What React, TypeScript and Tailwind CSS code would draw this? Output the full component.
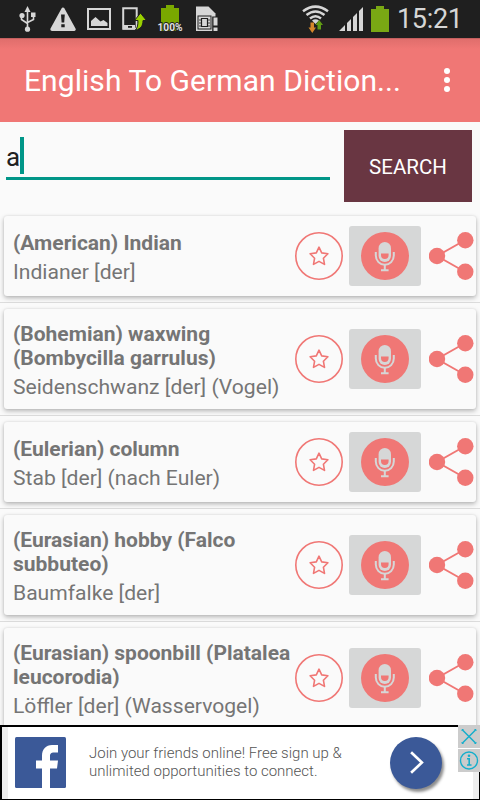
type Entry = {
  word: string;
  translation: string;
  lines: 1 | 2;
};

const entries: Entry[] = [
  { word: "(American) Indian", translation: "Indianer [der]", lines: 1 },
  {
    word: "(Bohemian) waxwing (Bombycilla garrulus)",
    translation: "Seidenschwanz [der] (Vogel)",
    lines: 2,
  },
  {
    word: "(Eulerian) column",
    translation: "Stab [der] (nach Euler)",
    lines: 1,
  },
  {
    word: "(Eurasian) hobby (Falco subbuteo)",
    translation: "Baumfalke [der]",
    lines: 2,
  },
  {
    word: "(Eurasian) spoonbill (Platalea leucorodia)",
    translation: "Löffler [der] (Wasservogel)",
    lines: 2,
  },
];

function StatusBar() {
  return (
    <div className="flex h-[38px] shrink-0 items-center bg-[#1f1f1f] text-[#d6d6d6]">
      {/* usb */}
      <svg className="ml-[19px] h-[26px] w-[17px]" viewBox="0 0 17 26">
        <path d="M8.5 3v20M2.5 10v3.500l6 4M14.500 10v3.500l-6 3" fill="none" stroke="currentColor" strokeWidth="1.600" />
        <path d="M8.500 0l3 6h-6z" fill="currentColor" />
        <circle cx="3" cy="9.500" r="2.600" fill="currentColor" />
        <path d="M12 6.500h4.500v4.500h-4.500z" fill="currentColor" />
        <circle cx="8.500" cy="23.200" r="2.600" fill="currentColor" />
      </svg>
      {/* warning */}
      <svg className="ml-[14px] h-[24px] w-[26px]" viewBox="0 0 26 24">
        <path d="M13 2.300L24 22.300H2z" fill="currentColor" stroke="currentColor" strokeWidth="3.400" strokeLinejoin="round" />
        <path d="M11 7.500h3.800l-.6 8h-2.600z" fill="#1f1f1f" />
        <path d="M11.300 17.300h3.400v2.900h-3.400z" fill="#1f1f1f" />
      </svg>
      {/* picture */}
      <svg className="ml-[11px] h-[22px] w-[24px]" viewBox="0 0 24 22">
        <path d="M1 1h22v20H1z" fill="none" stroke="currentColor" strokeWidth="2" />
        <path d="M4 18v-5l4.500-4 5 4.500 3-1.500 4 3v3z" fill="currentColor" />
      </svg>
      {/* phone */}
      <svg className="ml-[11px] h-[24px] w-[25px]" viewBox="0 0 25 24">
        <path d="M1.200 1.200h13.500v20.600h-13.500z" fill="none" stroke="currentColor" strokeWidth="2" />
        <path d="M1 18h12v4.500H1z" fill="currentColor" />
        <path d="M6 19h4v1.800h-4z" fill="#1f1f1f" />
        <path d="M18.500 6l6 7.500h-3.500c0 5-2 8.500-7.500 9.500 2-2.500 2.500-5 2.500-9.500h-3.500z" fill="#99d000" stroke="#1f1f1f" strokeWidth="1" />
      </svg>
      {/* battery level */}
      <svg className="ml-[9px] h-[30px] w-[28px]" viewBox="0 0 28 30">
        <path d="M5 4h5V1h8v3h5v23H5z" fill="#7aa800" />
        <text x="14" y="26.500" textAnchor="middle" fontFamily="Roboto" fontWeight="700" fontSize="11" textLength="25" lengthAdjust="spacingAndGlyphs" fill="#e2e2e2" stroke="#1f1f1f" strokeWidth="2" paintOrder="stroke">
          100%
        </text>
      </svg>
      {/* sim */}
      <svg className="ml-[11px] h-[26px] w-[24px]" viewBox="0 0 24 26">
        <path d="M1 0.500h12.500l7 7v17.500H1z" fill="currentColor" />
        <path d="M2.500 9.500h14v14h-14z" fill="#1f1f1f" />
        <path d="M3.500 10.500h12v12h-12z" fill="currentColor" />
        <path d="M6.500 12.500h6v8h-6z" fill="none" stroke="#1f1f1f" strokeWidth="1.200" />
        <path d="M4 14h2.500M4 17h2.500M4 20h2.500M12.500 14H15M12.500 17H15M12.500 20H15" stroke="#1f1f1f" strokeWidth=".8" />
        <path d="M17.200 10.500h6.800v15.500h-6.800z" fill="#1f1f1f" />
        <path d="M18.500 11.500h4v8h-4zM18.500 21.500h4v3.500h-4z" fill="currentColor" />
      </svg>
      {/* wifi */}
      <svg className="ml-auto mr-[10px] h-[28px] w-[27px]" viewBox="0 0 27 28">
        <g fill="none" stroke="currentColor" strokeWidth="2.500">
          <path d="M1 6.200Q13.500-3 26 6.200" />
          <path d="M4.500 10Q13.500 3 22.500 10" />
          <path d="M8 13.500Q13.500 9 19 13.500" />
        </g>
        <path d="M10 15.500q3.500-2.500 7 0L13.500 19z" fill="currentColor" />
        <path d="M8.500 17.500h3.500v5h2l-3.700 5.500L6.500 22.500h2z" fill="#d6872b" />
        <path d="M15.500 24.500v-4.500h-2l3.700-5 3.800 5h-2v4.500z" fill="#609c14" />
      </svg>
      {/* signal */}
      <svg className="h-[24px] w-[25px]" viewBox="0 0 25 24">
        <path d="M0 24l6-6v6zM8 16l4-4v12H8zM14 10l4-4v18h-4zM20 4l4-4v24h-4z" fill="currentColor" />
      </svg>
      {/* battery */}
      <svg className="ml-[7px] h-[26px] w-[18px]" viewBox="0 0 18 26">
        <path d="M0 3h5V0h8v3h5v23H0z" fill="#7aa814" />
      </svg>
      <span className="ml-[8px] mr-[17px] w-[66px] whitespace-nowrap text-[27px] leading-[38px] tracking-[-0.3px]">
        15:21
      </span>
    </div>
  );
}

function StarButton() {
  return (
    <svg className="size-12" viewBox="0 0 48 48" fill="none" stroke="#f07775">
      <circle cx="24" cy="24" r="23.200" strokeWidth="1.600" />
      <path
        d="M24 15.200l2.700 5.700 6.200.9-4.500 4.400 1.100 6.200-5.500-3-5.500 3 1.100-6.200-4.500-4.400 6.200-.9z"
        strokeWidth="1.600"
        strokeLinejoin="round"
      />
    </svg>
  );
}

function MicButton() {
  return (
    <div className="flex h-[60px] w-[72px] items-center justify-center rounded-[3px] bg-[#d6d7d7]">
      <svg className="size-12" viewBox="0 0 48 48">
        <circle cx="24" cy="24" r="24" fill="#f07775" />
        <rect x="17.600" y="10" width="12.400" height="20" rx="6.200" fill="#d6d7d7" />
        <path d="M20 21.500h7.600v1.500a3.800 4 0 0 1-7.600 0z" fill="#f07775" />
        <path d="M14.800 20v3.500a9 9.300 0 0 0 18 0V20" fill="none" stroke="#d6d7d7" strokeWidth="2" />
        <path d="M23.800 33v5M20 38.300h7.600" stroke="#d6d7d7" strokeWidth="2" />
      </svg>
    </div>
  );
}

function ShareButton() {
  return (
    <svg className="h-12 w-[46px]" viewBox="0 0 46 48" fill="#f07775">
      <path d="M36.300 8L8 24l28.300 16" fill="none" stroke="#f07775" strokeWidth="1.900" />
      <circle cx="8" cy="24" r="8.200" />
      <circle cx="36.300" cy="8.200" r="8.200" />
      <circle cx="36.300" cy="39.800" r="8.200" />
    </svg>
  );
}

function EntryCard({ word, translation, lines }: Entry) {
  return (
    <div className="border-b border-[#dcdcdc] px-1 py-1.5">
      <div
        className={`flex items-center rounded-[3px] bg-[#fafafa] shadow-[0_2px_5px_rgba(0,0,0,0.28),0_0_2px_rgba(0,0,0,0.1)] ${
          lines === 1 ? "h-[80px] [&>div]:pt-[15px]" : "h-[100px] [&>div]:pt-[13px]"
        }`}
      >
        <div className="w-[291px] shrink-0 self-start pl-[9px] text-[#757575]">
          <p className="w-[282px] text-[21px] font-bold leading-6">{word}</p>
          <p className="mt-[5px] whitespace-nowrap text-[21.1px] leading-6">
            {translation}
          </p>
        </div>
        <section className="flex items-center">
          <StarButton />
          <span className="ml-[6px] mr-[8px]">
            <MicButton />
          </span>
          <ShareButton />
        </section>
      </div>
    </div>
  );
}

function AdBanner() {
  return (
    <div className="absolute inset-x-0 bottom-0 flex h-[75px] border-b border-l-2 border-r border-t-2 border-black bg-white">
      <div className="w-[6px] bg-[#eeeeee]" />
      <div className="flex flex-1">
        <svg className="ml-[7px] mt-[10px] size-[51px]" viewBox="0 0 51 51">
          <rect width="51" height="51" rx="1.500" fill="#3b5998" />
          <path d="M27 51V31.500h-6v-8h6v-4.500c0-7 4-11 10-11h6v7.500h-4c-3 0-4 1-4 4v4h8l-1 8h-7v19.500z" fill="#fff" />
        </svg>
        <p className="ml-[23px] mt-[17px] whitespace-nowrap text-[15px] font-light leading-[18px] text-[#555]">
          Join your friends online! Free sign up &amp;
          <br />
          unlimited opportunities to connect.
        </p>
      </div>
      <div className="mr-[31px] mt-[10px] flex size-[52px] items-center justify-center rounded-full bg-[#3b5998] shadow-[2px_3px_3px_rgba(0,0,0,0.45)]">
        <svg className="size-[52px]" viewBox="0 0 53 53" fill="none" stroke="#fff" strokeWidth="2.700">
          <path d="M21.500 15.500L32.500 26l-11 10.500" />
        </svg>
      </div>
      <div className="w-[6px] bg-[#eeeeee]" />
      <div className="absolute -right-px -top-[2px] flex w-[22px] flex-col gap-px bg-white">
        <svg className="h-[23px] w-[22px] bg-[#cccccc]" viewBox="0 0 22 23" fill="none" stroke="#16aecb" strokeWidth="1.500">
          <path d="M4.500 5l13 13M17.500 5l-13 13" />
          <path d="M4 6V4.500h1.500M16.500 4.500h1.500V6M4 17v1.500h1.500M16.500 18.500h1.500V17" strokeWidth="1" />
        </svg>
        <svg className="h-[23px] w-[22px] bg-[#cccccc]" viewBox="0 0 22 23" fill="none" stroke="#16aecb">
          <circle cx="11" cy="11.500" r="8.500" strokeWidth="1.400" />
          <path d="M9 9.800h2.200v6.200M9 16h4.500" strokeWidth="1.600" />
          <circle cx="11" cy="6.800" r="1.300" fill="#16aecb" stroke="none" />
        </svg>
      </div>
    </div>
  );
}

function App() {
  return (
    <div className="relative flex h-[800px] w-[480px] flex-col overflow-hidden bg-[#fafafa] font-[Roboto,sans-serif]">
      <StatusBar />
      <header className="flex h-[84px] shrink-0 items-center justify-between border-t border-[#c4605f] bg-linear-to-b from-[#e06e6c] to-[#f07775] to-[10px] pl-6 pr-[30px] text-white">
        <h1 className="whitespace-nowrap text-[30px] leading-[84px] tracking-[0.06px]">
          English To German Diction...
        </h1>
        <div className="-mt-[2px] flex flex-col gap-[3px]">
          <span className="size-[6px] rounded-full bg-white" />
          <span className="size-[6px] rounded-full bg-white" />
          <span className="size-[6px] rounded-full bg-white" />
        </div>
      </header>
      <div className="flex h-[88px] shrink-0 items-start justify-between pl-[6px] pr-2 pt-2">
        <div className="flex h-[50px] w-[324px] border-b-3 border-[#009688] pt-[7px]">
          <span className="w-[14px] text-[26px] leading-[40px] text-[#212121]">a</span>
          <span className="h-[37px] w-1 bg-[#009688]" />
        </div>
        <button className="h-[72px] w-[128px] bg-[#693642] pt-[3px] text-[20.5px] text-white">
          SEARCH
        </button>
      </div>
      <div className="min-h-0 flex-1">
        {entries.map((entry) => (
          <EntryCard key={entry.word} {...entry} />
        ))}
      </div>
      <AdBanner />
    </div>
  );
}

export default App;
